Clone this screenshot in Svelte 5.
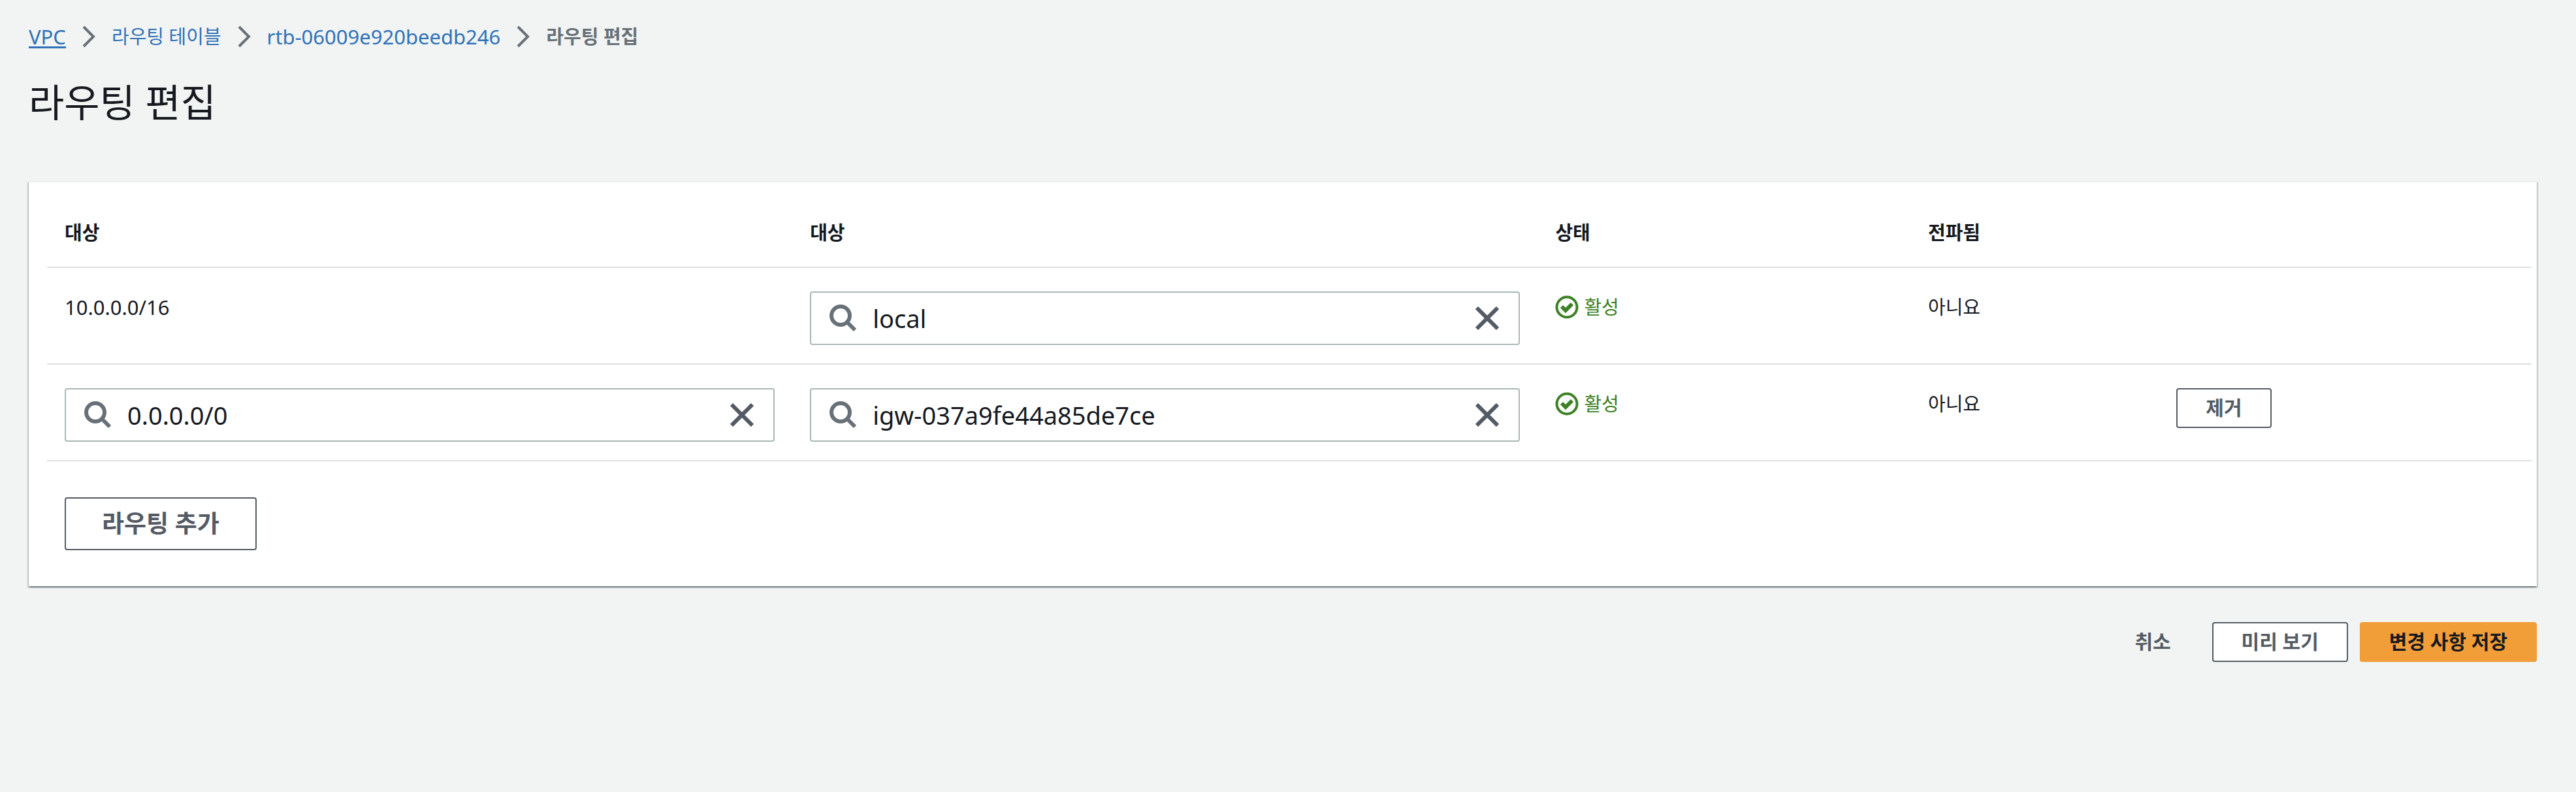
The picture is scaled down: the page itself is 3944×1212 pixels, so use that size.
<script>
  const crumbs = [
    { label: 'VPC', latin: true, underline: true },
    { label: '라우팅 테이블' },
    { label: 'rtb-06009e920beedb246', latin: true },
  ];

  let routes = $state([
    { destination: '10.0.0.0/16', target: 'local', status: '활성', propagated: '아니요', fixed: true },
    { destination: '0.0.0.0/0', target: 'igw-037a9fe44a85de7ce', status: '활성', propagated: '아니요', fixed: false },
  ]);

  function addRoute() {
    routes.push({ destination: '', target: '', status: '-', propagated: '아니요', fixed: false });
  }

  function removeRoute(index) {
    routes.splice(index, 1);
  }
</script>

{#snippet searchField(route, key, label)}
  <div class="field">
    <svg class="search-icon" viewBox="0 0 42 42" aria-hidden="true">
      <circle cx="17" cy="17" r="14" />
      <path d="M27 27 L39 39" />
    </svg>
    <input type="text" aria-label={label} bind:value={route[key]} />
    <button type="button" class="clear" aria-label="지우기" onclick={() => (route[key] = '')}>
      <svg viewBox="0 0 36 36" aria-hidden="true">
        <path d="M2 2 L34 34 M34 2 L2 34" />
      </svg>
    </button>
  </div>
{/snippet}

<main>
  <nav aria-label="이동 경로">
    <ol>
      {#each crumbs as crumb}
        <li>
          <a href="#top" class:latin={crumb.latin} class:underline={crumb.underline}>{crumb.label}</a>
          <svg class="chevron" viewBox="0 0 20 34" aria-hidden="true">
            <path d="M2 2 L17 17 L2 32" />
          </svg>
        </li>
      {/each}
      <li class="current" aria-current="page">라우팅 편집</li>
    </ol>
  </nav>

  <h1>라우팅 편집</h1>

  <section class="card">
    <table>
      <colgroup>
        <col class="wide" />
        <col class="wide" />
        <col class="medium" />
        <col class="narrow" />
        <col class="medium" />
      </colgroup>
      <thead>
        <tr>
          <th scope="col">대상</th>
          <th scope="col">대상</th>
          <th scope="col">상태</th>
          <th scope="col">전파됨</th>
          <td></td>
        </tr>
      </thead>
      <tbody>
        {#each routes as route, index}
          <tr>
            <td>
              {#if route.fixed}
                <span class="text latin">{route.destination}</span>
              {:else}
                {@render searchField(route, 'destination', '대상')}
              {/if}
            </td>
            <td>{@render searchField(route, 'target', '대상')}</td>
            <td>
              <span class="text status">
                <svg viewBox="0 0 36 36" aria-hidden="true">
                  <circle cx="18" cy="18" r="15.5" />
                  <path d="M10 17 L16 23 L26 13" />
                </svg>
                {route.status}
              </span>
            </td>
            <td><span class="text">{route.propagated}</span></td>
            <td>
              {#if !route.fixed}
                <button type="button" class="button" onclick={() => removeRoute(index)}>제거</button>
              {/if}
            </td>
          </tr>
        {/each}
      </tbody>
    </table>
    <button type="button" class="button large" onclick={addRoute}>라우팅 추가</button>
  </section>

  <footer>
    <button type="button" class="button link">취소</button>
    <button type="button" class="button">미리 보기</button>
    <button type="button" class="button primary">변경 사항 저장</button>
  </footer>
</main>

<style>
  :global(body) {
    background: #f2f4f3;
  }

  main {
    padding: 35px 60px 48px 44px;
    color: #16191f;
    font-family: 'Noto Sans', 'Noto Sans CJK KR', sans-serif;
    font-size: 29px;
    line-height: 42px;
  }

  ol {
    display: flex;
    margin: 0;
    padding: 0;
    list-style: none;
  }

  li {
    display: flex;
    align-items: center;
  }

  a {
    color: #2f72b8;
    text-decoration: none;
  }

  .underline {
    text-decoration: underline;
    text-decoration-thickness: 3px;
    text-underline-offset: 3px;
  }

  .latin {
    font-size: 31px;
  }

  .chevron {
    width: 20px;
    height: 34px;
    margin: 0 25px;
    fill: none;
    stroke: #687078;
    stroke-width: 4;
  }

  .current {
    color: #687078;
    font-weight: 700;
  }

  h1 {
    margin: 43px 0 85px;
    font-size: 59px;
    font-weight: 400;
    line-height: 72px;
  }

  .card {
    padding: 0 8px 55px 28px;
    background: #fff;
    border-top: 2px solid #eaeded;
    box-shadow:
      0 2px 2px 0 rgba(0, 28, 36, 0.4),
      2px 2px 2px 0 rgba(0, 28, 36, 0.15),
      -2px 2px 2px 0 rgba(0, 28, 36, 0.15);
  }

  table {
    width: 100%;
    table-layout: fixed;
    border-collapse: separate;
    border-spacing: 0;
  }

  .wide {
    width: 30%;
  }

  .medium {
    width: 15%;
  }

  .narrow {
    width: 10%;
  }

  th,
  td {
    padding: 36px 27px 28px;
    border-bottom: 2px solid #e0e0e0;
    text-align: left;
    vertical-align: top;
  }

  thead th,
  thead td {
    padding: 56px 27px 31px;
    font-weight: 700;
  }

  .text {
    display: block;
    line-height: 48px;
  }

  .status {
    display: flex;
    align-items: center;
    gap: 8px;
    color: #3d8124;
  }

  .status svg {
    width: 36px;
    height: 36px;
    fill: none;
    stroke: currentColor;
    stroke-width: 4;
  }

  .status path {
    stroke-width: 6;
  }

  .field {
    display: flex;
    align-items: center;
    box-sizing: border-box;
    height: 82px;
    padding: 0 30px 0 28px;
    background: #fff;
    border: 2px solid #aab7b8;
    border-radius: 4px;
  }

  .field svg {
    display: block;
    fill: none;
    stroke: #545b64;
    stroke-width: 6;
  }

  .field .search-icon {
    flex: none;
    width: 42px;
    height: 42px;
    stroke: #687078;
  }

  input {
    flex: 1;
    min-width: 0;
    padding: 0 24px;
    color: inherit;
    background: none;
    border: 0;
    outline: 0;
    font-family: inherit;
    font-size: 38px;
    line-height: 56px;
  }

  .clear {
    flex: none;
    padding: 0;
    background: none;
    border: 0;
    cursor: pointer;
  }

  .clear svg {
    width: 36px;
    height: 36px;
  }

  .button {
    padding: 7px 43px 8px;
    color: #545b64;
    background: #fff;
    border: 2px solid #545b64;
    border-radius: 4px;
    font-family: inherit;
    font-size: 30px;
    font-weight: 700;
    line-height: 42px;
    cursor: pointer;
  }

  .large {
    display: block;
    margin: 55px 0 0 27px;
    padding: 10px 55px 11px;
    font-size: 37px;
    line-height: 56px;
  }

  .link {
    background: transparent;
    border-color: transparent;
  }

  .primary {
    color: #16191f;
    background: #f29e38;
    border-color: #f29e38;
  }

  footer {
    display: flex;
    justify-content: flex-end;
    gap: 18px;
    margin-top: 55px;
  }
</style>
